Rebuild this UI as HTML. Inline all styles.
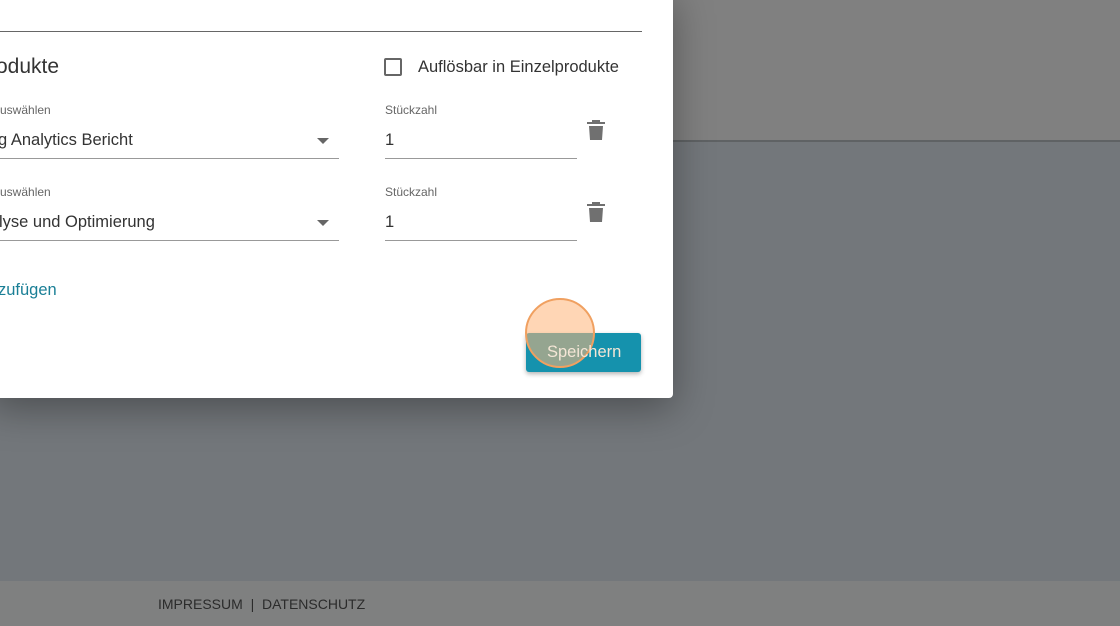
<!DOCTYPE html>
<html><head><meta charset="utf-8"><style>
*{margin:0;padding:0;box-sizing:border-box}
body{width:1120px;height:626px;overflow:hidden;position:relative;font-family:"Liberation Sans",sans-serif;background:#73777b}
.top{position:absolute;left:0;top:0;width:1120px;height:142px;background:#808080;border-bottom:2px solid #5f6264}
.foot{position:absolute;left:0;top:581px;width:1120px;height:45px;background:#7f8080}
.foot span{position:absolute;left:158px;top:15px;font-size:14px;color:#2b2b2b}
.dlg{position:absolute;left:-10px;top:-10px;width:683px;height:408px;background:#fff;border-radius:4px;box-shadow:0 10px 40px rgba(0,0,0,.35)}
.t{position:absolute;color:#3a3a3a;white-space:nowrap}
.lab{font-size:12px;color:#666}
.val{font-size:16.5px;color:#333}
.line{position:absolute;height:1px;background:#999}
.arrow{position:absolute;width:0;height:0;border-left:6px solid transparent;border-right:6px solid transparent;border-top:6px solid #666}
</style></head><body>
<div class="top"></div>
<div class="foot"><span>IMPRESSUM &nbsp;|&nbsp; DATENSCHUTZ</span></div>
<div class="dlg"></div>
<div class="line" style="left:0;top:31px;width:642px;background:#666"></div>
<div class="t" style="left:-4px;top:55px;font-size:21px;color:#333">odukte</div>
<div style="position:absolute;left:384px;top:58px;width:18px;height:18px;border:2px solid #666;border-radius:2px"></div>
<div class="t" style="left:418px;top:58px;font-size:16.5px;color:#333">Auflösbar in Einzelprodukte</div>

<div class="t lab" style="left:0;top:103px">uswählen</div>
<div class="t val" style="left:-2px;top:131px">g Analytics Bericht</div>
<div class="arrow" style="left:317px;top:138px"></div>
<div class="line" style="left:0;top:158px;width:339px"></div>
<div class="t lab" style="left:385px;top:103px">Stückzahl</div>
<div class="t val" style="left:385px;top:131px">1</div>
<div class="line" style="left:385px;top:158px;width:192px"></div>

<div class="t lab" style="left:0;top:185px">uswählen</div>
<div class="t val" style="left:-1px;top:213px">lyse und Optimierung</div>
<div class="arrow" style="left:317px;top:220px"></div>
<div class="line" style="left:0;top:240px;width:339px"></div>
<div class="t lab" style="left:385px;top:185px">Stückzahl</div>
<div class="t val" style="left:385px;top:213px">1</div>
<div class="line" style="left:385px;top:240px;width:192px"></div>

<svg style="position:absolute;left:586px;top:119px" width="20" height="22" viewBox="0 0 20 22"><path d="M6 1h8v2h5v2H1V3h5z M3 7h14l-1 14H4z" fill="#707070"/></svg>
<svg style="position:absolute;left:586px;top:201px" width="20" height="22" viewBox="0 0 20 22"><path d="M6 1h8v2h5v2H1V3h5z M3 7h14l-1 14H4z" fill="#707070"/></svg>

<div class="t" style="left:-2px;top:281px;font-size:16.5px;color:#1a7f96">zufügen</div>

<div style="position:absolute;left:526px;top:333px;width:115px;height:39px;background:#1592ad;border-radius:3px;box-shadow:0 2px 5px rgba(0,0,0,.3)"></div>
<div style="position:absolute;left:525px;top:298px;width:70px;height:70px;border-radius:50%;background:rgba(255,180,120,.55);border:2px solid #f0a060"></div>
<div class="t" style="left:547px;top:343px;font-size:16.5px;color:#f4e6d6">Speichern</div>
</body></html>
